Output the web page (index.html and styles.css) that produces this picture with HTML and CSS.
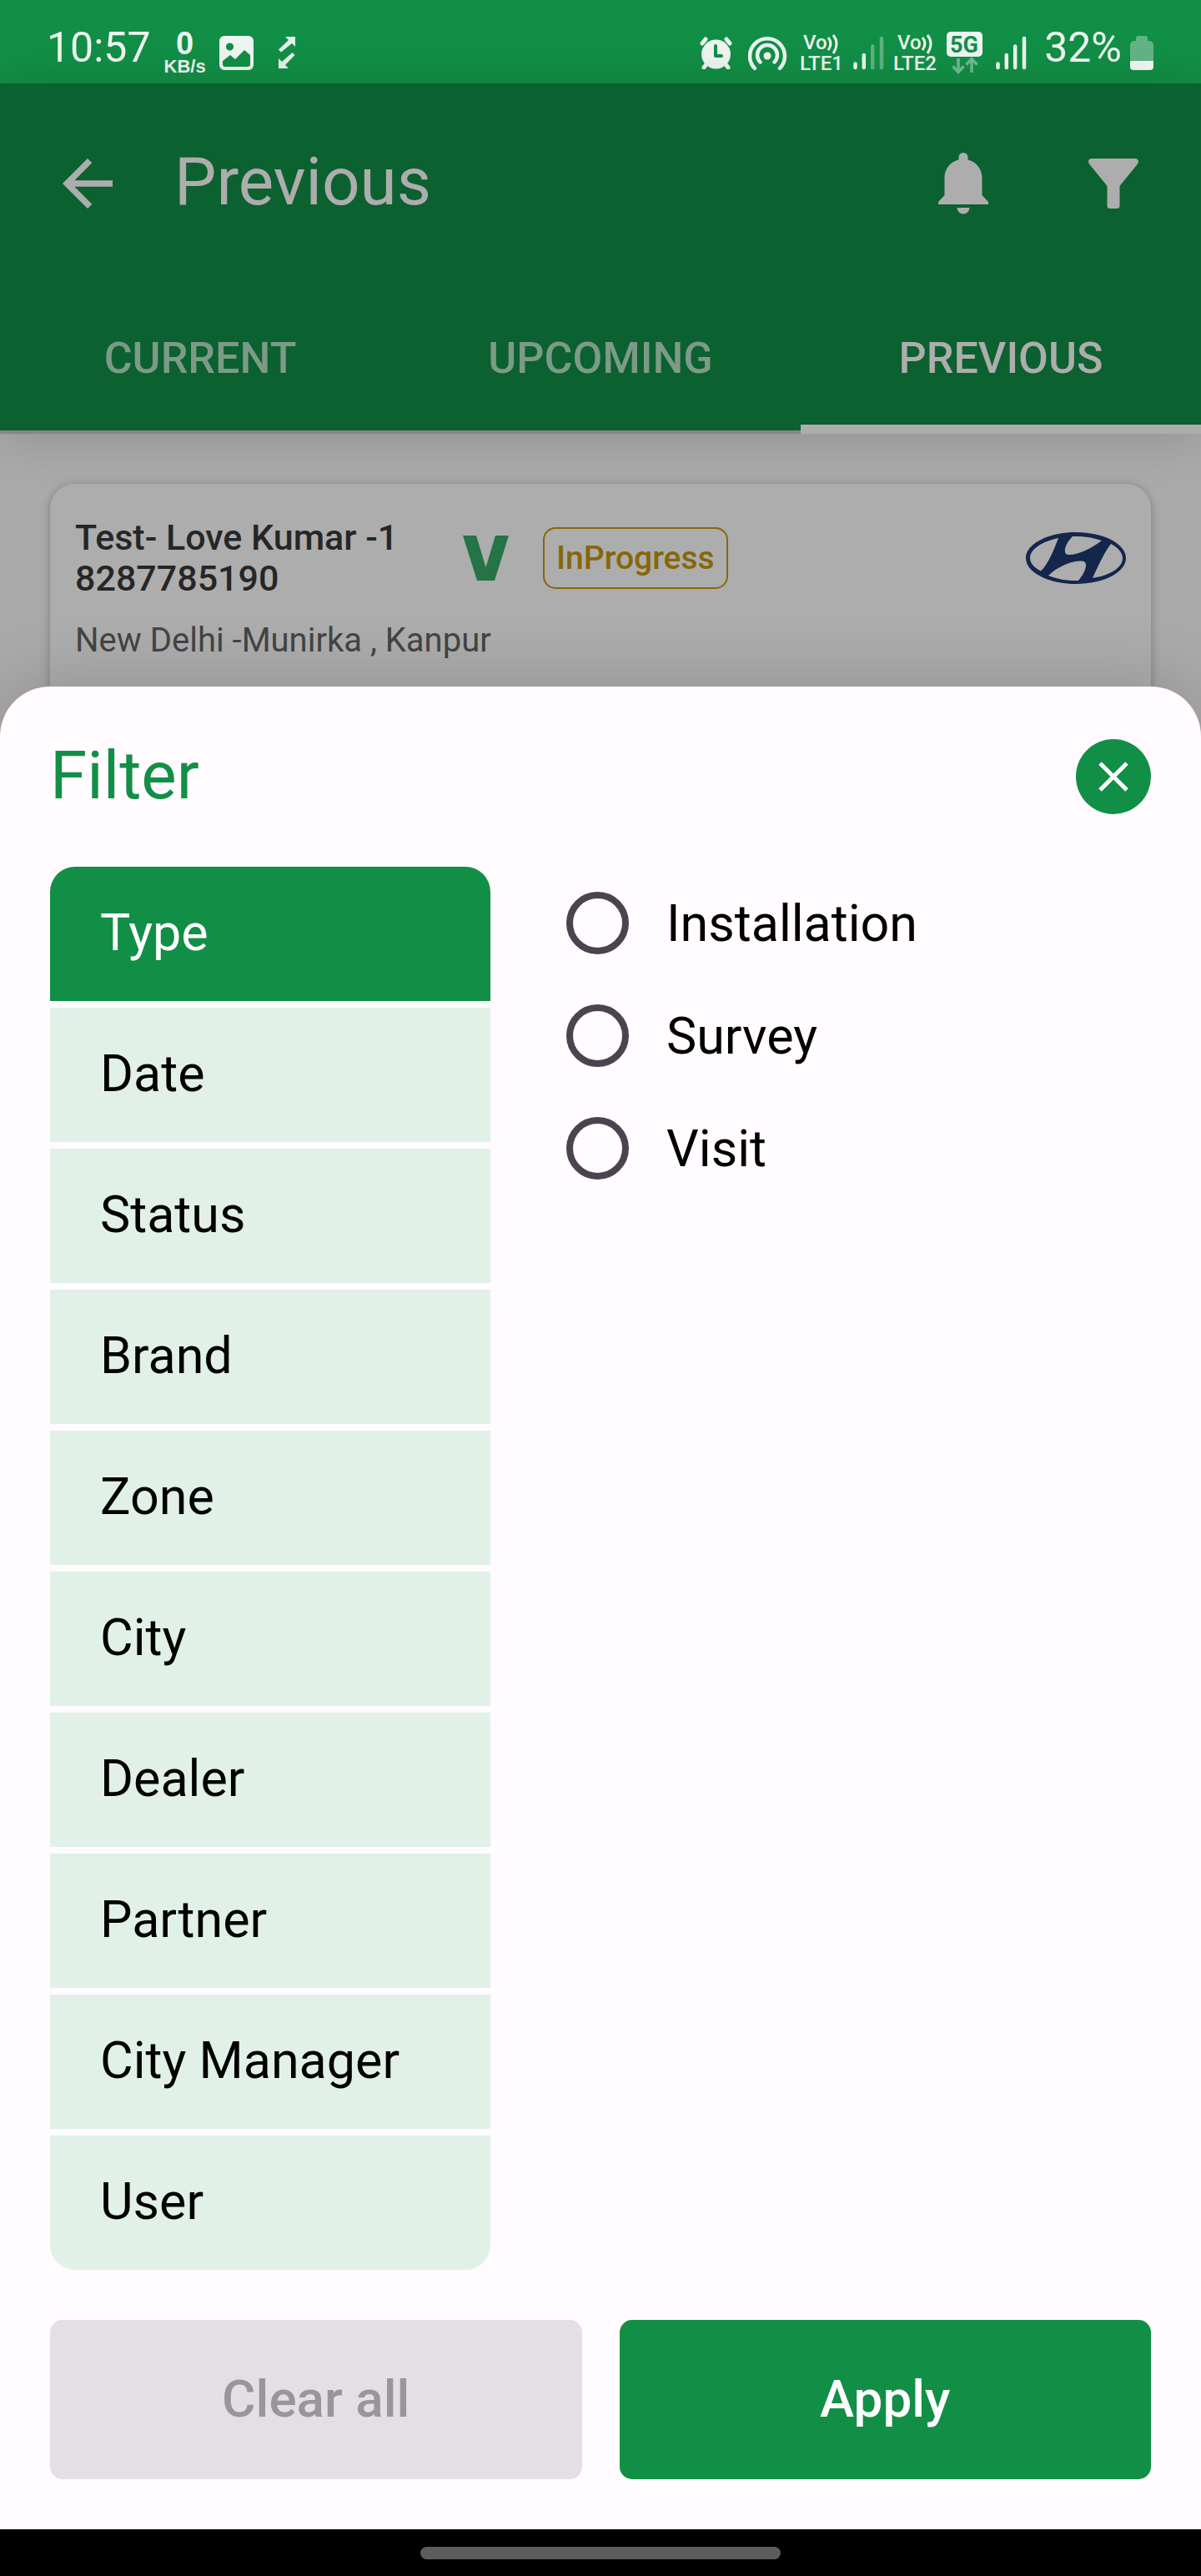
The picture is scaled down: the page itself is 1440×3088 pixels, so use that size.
FILE: index.html
```html
<!DOCTYPE html>
<html lang="en">
<head>
<meta charset="utf-8">
<meta name="viewport" content="width=device-width, initial-scale=1">
<title>Previous</title>
<link rel="stylesheet" href="styles.css">
</head>
<body>
<div class="status-bar">
  <div class="status-group status-left">
    <span class="clock">10:57</span>
    <span class="net-speed"><b class="net-value">0</b><b class="net-unit">KB/s</b></span>
    <svg class="icon-image" width="41" height="41" viewBox="0 0 41 41" aria-hidden="true"><path fill="#edf6f1" fill-rule="evenodd" d="M6 0h29a6 6 0 0 1 6 6v29a6 6 0 0 1-6 6H6a6 6 0 0 1-6-6V6a6 6 0 0 1 6-6zM12.500 8.500a4.500 4.500 0 1 0 .01 0zM4 30v4a3 3 0 0 0 3 3h27a3 3 0 0 0 3-3V23l-7-6-11 11-6-5z"/></svg>
    <svg width="20" height="38" viewBox="0 0 20 38" aria-hidden="true"><path fill="#e3f3ea" d="M8 0h12v12l-4-4L3 18.500 0 15.500 12 4zM12 38H0V26l4 4L16.500 19l3 3L8 34z"/></svg>
  </div>
  <div class="status-group status-right">
    <svg width="46" height="40" viewBox="0 0 46 40" aria-hidden="true"><g fill="none" stroke="#edf6f1" stroke-width="5" stroke-linecap="round"><path d="M3 9l4-5M36 9l-4-5M8 34l-3 4M31 34l3 4"/></g><circle cx="19.500" cy="22" r="17.500" fill="#edf6f1"/><path fill="none" stroke="#128f46" stroke-width="4" stroke-linecap="round" stroke-linejoin="round" d="M19 12v12h7"/></svg>
    <svg width="51" height="42" viewBox="0 0 51 42" aria-hidden="true"><g fill="none" stroke="#edf6f1" stroke-width="4.500" stroke-linecap="round"><path d="M8 40a21 21 0 1 1 30 0M14.500 32.500a12 12 0 1 1 17 0"/></g><circle cx="23" cy="25" r="4.500" fill="#edf6f1"/></svg>
    <svg class="volte" width="51" height="46" viewBox="0 0 51 46" aria-label="VoLTE 1"><text x="3" y="19" font-size="24">Vo</text><path d="M33 5q6 7 0 15M39 2q8 10 0 22"/><text x="-1" y="44" font-size="24">LTE1</text></svg>
    <svg width="37" height="41" viewBox="0 0 37 41" aria-hidden="true"><g stroke="#edf6f1" stroke-width="4.500" stroke-linecap="round"><path d="M2.500 33.500V38M12.800 23V38"/><path opacity=".35" d="M23.200 12.500V38M34 3V38"/></g></svg>
    <svg class="volte" width="51" height="46" viewBox="0 0 51 46" aria-label="VoLTE 2"><text x="4" y="19" font-size="24">Vo</text><path d="M34 5q6 7 0 15M40 2q8 10 0 22"/><text x="-1" y="44" font-size="24">LTE2</text></svg>
    <svg class="fiveg" width="47" height="54" viewBox="0 0 47 54" aria-label="5G"><rect width="43" height="30" rx="5" y="2" fill="#edf6f1"/><text x="21" y="27" text-anchor="middle" font-size="27">5G</text><path fill="none" stroke="#6fbb8f" stroke-width="3.500" d="M14 34v16M7.500 43.500l6.500 7 6.500-7M30 51V35M23.500 41.500l6.500-7 6.500 7"/></svg>
    <svg width="46" height="41" viewBox="0 0 46 41" aria-hidden="true"><g stroke="#edf6f1" stroke-width="4.500" stroke-linecap="round"><path d="M2.500 33.500V38M12.800 23V38M23.200 12.500V38M34 3V38"/></g></svg>
    <span class="battery"><span class="clock">32%</span><svg width="28" height="41" viewBox="0 0 28 41" aria-hidden="true"><path fill="#62b586" d="M10 0h8a3 3 0 0 1 3 3v3h2a5 5 0 0 1 5 5v20H0V11a5 5 0 0 1 5-5h2V3a3 3 0 0 1 3-3z"/><path fill="#f2f9f5" d="M0 30h28v7a4 4 0 0 1-4 4H4a4 4 0 0 1-4-4z"/></svg></span>
  </div>
</div>

<main class="page">
  <header class="app-header">
    <div class="app-bar">
      <button class="icon-button" type="button" aria-label="Back"><svg width="60" height="60" viewBox="0 0 60 60"><path fill="#adadad" d="M30 0l5.300 5.300L14.400 26.200H60v7.600H14.400l20.900 20.900L30 60 0 30z"/></svg></button>
      <h1 class="app-title">Previous</h1>
      <button class="icon-button" type="button" aria-label="Notifications"><svg width="60" height="74" viewBox="0 0 60 74"><path fill="#adadad" d="M30 0a5.500 5.500 0 0 1 5.500 5.500v3C46 11 52.500 20 52.500 30v21l7.500 8v3H0v-3l7.500-8V30C7.500 20 14 11 24.500 8.500v-3A5.500 5.500 0 0 1 30 0zM22.500 66h15a7.500 7.500 0 0 1-15 0z"/></svg></button>
      <button class="icon-button" type="button" aria-label="Filter"><svg width="60" height="60" viewBox="0 0 60 60"><path fill="#adadad" d="M4 0h52c4 0 5 4 3 6.500L37.500 33v23.500a3.500 3.500 0 0 1-3.500 3.500h-8a3.500 3.500 0 0 1-3.500-3.500V33L1 6.500C-1 4 0 0 4 0z"/></svg></button>
    </div>
    <nav class="tabs">
      <button class="tab" type="button">CURRENT</button>
      <button class="tab" type="button">UPCOMING</button>
      <button class="tab tab-active" type="button">PREVIOUS</button>
    </nav>
  </header>
  <section class="orders">
    <article class="order-card">
      <div class="order-head">
        <h2 class="order-name">Test- Love Kumar -1<br>8287785190</h2>
        <svg width="55" height="54" viewBox="0 0 55 54" aria-hidden="true"><path fill="#257346" d="M0 0h16l11.500 38L39 0h16L38 54H17z"/></svg>
        <span class="order-status">InProgress</span>
        <svg class="brand-logo" width="120" height="62" viewBox="0 0 120 62" role="img" aria-label="Hyundai"><path fill="#14264b" fill-rule="evenodd" d="M60 0C93 0 120 13.900 120 31S93 62 60 62 0 48.100 0 31 27 0 60 0zM39 7C20 11 5 20 5 31c0 6 5 11.500 13 15.500C27 38 34 20 39 7zM56 5C48 13 45 22 48 26c6 4 28-4 43-16C81 6.500 68 4.500 56 5zM27 52c10 4 23 6.500 36 6C70 50 74 40 71 36c-7-5-31 3-44 16zM102 14C94 24 87 40 80 55c20-3 36-12 36-24 0-6-5-12.500-14-17z"/></svg>
      </div>
      <p class="order-address">New Delhi -Munirka , Kanpur</p>
    </article>
  </section>
</main>

<section class="sheet" role="dialog" aria-labelledby="sheet-title">
  <div class="sheet-header">
    <h2 class="sheet-title" id="sheet-title">Filter</h2>
    <button class="close-button" type="button" aria-label="Close"><svg width="36" height="36" viewBox="0 0 36 36"><path fill="none" stroke="#fff" stroke-width="5" d="M2 2l32 32M34 2L2 34"/></svg></button>
  </div>
  <div class="sheet-body">
    <nav class="categories">
      <button class="category category-active" type="button">Type</button>
      <button class="category" type="button">Date</button>
      <button class="category" type="button">Status</button>
      <button class="category" type="button">Brand</button>
      <button class="category" type="button">Zone</button>
      <button class="category" type="button">City</button>
      <button class="category" type="button">Dealer</button>
      <button class="category" type="button">Partner</button>
      <button class="category" type="button">City Manager</button>
      <button class="category" type="button">User</button>
    </nav>
    <div class="options" role="radiogroup" aria-label="Type">
      <label class="option"><input class="option-radio" type="radio" name="type" value="installation">Installation</label>
      <label class="option"><input class="option-radio" type="radio" name="type" value="survey">Survey</label>
      <label class="option"><input class="option-radio" type="radio" name="type" value="visit">Visit</label>
    </div>
  </div>
  <div class="sheet-actions">
    <button class="action action-clear" type="button" disabled>Clear all</button>
    <button class="action action-apply" type="button">Apply</button>
  </div>
</section>

<div class="nav-bar"><span class="nav-pill"></span></div>
</body>
</html>
```
FILE: styles.css
```css
* {
  box-sizing: border-box;
}

body {
  margin: 0;
  min-height: 100vh;
  display: flex;
  flex-direction: column;
  background: #abaaab;
  font-family: Roboto, "Open Sans", sans-serif;
}

h1,
h2,
p {
  margin: 0;
  font-weight: 400;
}

button {
  margin: 0;
  padding: 0;
  border: 0;
  background: none;
  font: inherit;
  color: inherit;
}

svg {
  display: block;
  flex: none;
}

/* Status bar */

.status-bar {
  height: 100px;
  padding: 26px 57px 0 56px;
  display: flex;
  align-items: center;
  justify-content: space-between;
  background: #128f46;
  color: #edf6f1;
}

.status-group {
  display: flex;
  align-items: center;
}

.status-left {
  gap: 16px;
}

.status-right {
  gap: 12px;
}

.clock {
  font-size: 50px;
  line-height: 60px;
  padding-bottom: 12px;
}

.net-speed {
  display: flex;
  flex-direction: column;
  align-items: center;
  font-family: "Liberation Sans", Arial, sans-serif;
}

.net-value {
  font-size: 38px;
  line-height: 34px;
}

.net-unit {
  font-size: 22px;
  line-height: 22px;
}

.icon-image {
  margin-right: 14px;
}

.volte {
  fill: #edf6f1;
  font-weight: 500;
  overflow: visible;
}

.volte path {
  fill: none;
  stroke: #edf6f1;
  stroke-width: 3px;
}

.fiveg {
  fill: #128f46;
  font-weight: 700;
}

.battery {
  display: flex;
  align-items: center;
  gap: 10px;
}

/* Dimmed page behind the sheet */

.app-header {
  position: relative;
  background: #0b612f;
  color: #adadad;
  box-shadow: 0 4px 60px rgba(0, 0, 0, 0.16);
}

.app-bar {
  height: 240px;
  padding: 0 75px;
  display: flex;
  align-items: center;
  gap: 120px;
}

.app-title {
  flex: 1;
  margin-left: -46px;
  padding-bottom: 4px;
  font-size: 80px;
  line-height: 96px;
}

.tabs {
  display: grid;
  grid-template-columns: repeat(3, 1fr);
  height: 180px;
}

.tab {
  padding-top: 2px;
  border-bottom: 4px solid #88838a;
  font-size: 52px;
  font-weight: 500;
  color: #7c9a87;
}

.tab-active {
  padding-top: 9px;
  border-bottom: 11px solid #adadad;
  color: #adadad;
}

.orders {
  padding: 60px 60px 0;
}

.order-card {
  padding: 40px 30px 91px;
  border-radius: 30px 30px 0 0;
  background: #adadad;
  box-shadow: 0 2px 12px rgba(0, 0, 0, 0.28);
}

.order-head {
  display: flex;
  align-items: center;
}

.order-name {
  flex: 0 0 465px;
  font-size: 43px;
  line-height: 49px;
  font-weight: 500;
  color: #262626;
}

.order-status {
  height: 74px;
  margin-left: 41px;
  padding: 0 14px;
  display: flex;
  align-items: center;
  border: 2px solid #866708;
  border-radius: 15px;
  font-size: 39px;
  font-weight: 500;
  color: #866708;
}

.brand-logo {
  margin-left: auto;
}

.order-address {
  margin-top: 25px;
  font-size: 40px;
  line-height: 49px;
  color: #444;
}

/* Filter sheet */

.sheet {
  position: relative;
  flex: 1;
  margin-top: -60px;
  padding: 63px 60px 60px;
  display: flex;
  flex-direction: column;
  border-radius: 60px 60px 0 0;
  background: #fffbff;
  color: #000;
  box-shadow: 0 0 90px rgba(0, 0, 0, 0.18);
}

.sheet-header {
  display: flex;
  align-items: center;
  justify-content: space-between;
}

.sheet-title {
  padding-bottom: 2px;
  font-size: 80px;
  line-height: 88px;
  color: #128f46;
}

.close-button {
  width: 90px;
  height: 90px;
  display: grid;
  place-items: center;
  border-radius: 50%;
  background: #128f46;
}

.sheet-body {
  flex: 1;
  margin-top: 63px;
  display: flex;
  align-items: flex-start;
  gap: 91px;
}

.categories {
  flex: 0 0 40%;
  display: flex;
  flex-direction: column;
  gap: 8px;
  border-radius: 30px;
  overflow: hidden;
}

.category {
  height: 161px;
  padding: 0 60px 3px;
  background: #e1f1e7;
  font-size: 61px;
  text-align: left;
}

.category-active {
  background: #128f46;
  color: #fff;
}

.options {
  flex: 1;
}

.option {
  height: 135px;
  display: flex;
  align-items: center;
  gap: 45px;
  font-size: 61px;
}

.option-radio {
  appearance: none;
  width: 75px;
  height: 75px;
  margin: 0;
  border: 8px solid #49454f;
  border-radius: 50%;
}

.sheet-actions {
  margin-top: 60px;
  display: grid;
  grid-template-columns: 1fr 1fr;
  gap: 45px;
}

.action {
  height: 191px;
  padding-bottom: 3px;
  border-radius: 15px;
  font-size: 62px;
  font-weight: 500;
}

.action-clear {
  background: #e4dfe3;
  color: #9a959b;
}

.action-apply {
  background: #128f46;
  color: #fff;
}

/* System navigation bar */

.nav-bar {
  position: relative;
  height: 56px;
  display: grid;
  place-items: center;
  background: #000;
}

.nav-pill {
  width: 30%;
  height: 15px;
  border-radius: 8px;
  background: #5c5c5c;
}
```
